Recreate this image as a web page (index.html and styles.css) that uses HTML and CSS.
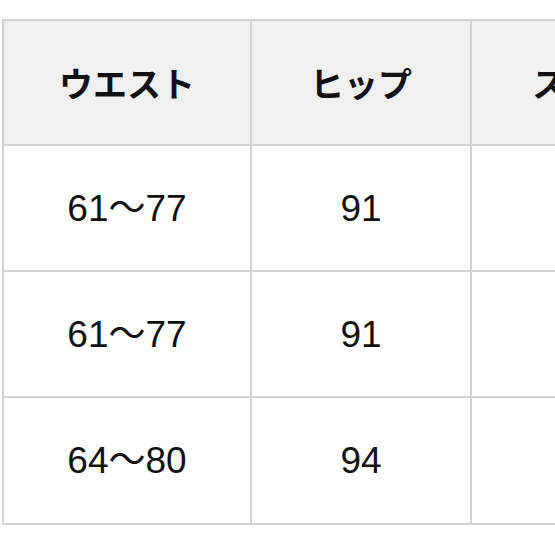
FILE: index.html
```html
<!DOCTYPE html>
<html lang="ja">
<head>
<meta charset="utf-8">
<link rel="stylesheet" href="styles.css">
</head>
<body>
<div class="wrap">
<table class="size">
<colgroup><col class="c1"><col class="c2"><col class="c3"></colgroup>
<thead>
<tr class="head"><th>ウエスト</th><th>ヒップ</th><th>スカート丈</th></tr>
</thead>
<tbody>
<tr class="r1"><td>61～77</td><td>91</td><td></td></tr>
<tr class="r2"><td>61～77</td><td>91</td><td></td></tr>
<tr class="r3"><td>64～80</td><td>94</td><td></td></tr>
</tbody>
</table>
</div>
</body>
</html>
```
FILE: styles.css
```css
html, body { margin: 0; padding: 0; background: #fff; }
.wrap {
  width: 555px;
  height: 555px;
  overflow: hidden;
  padding: 19px 0 0 2px;
  box-sizing: border-box;
}
.size {
  table-layout: fixed;
  width: 762px;
  border-collapse: separate;
  border-spacing: 0;
  border-left: 2px solid #d3d3d3;
  border-top: 2px solid #d3d3d3;
  font-family: "Liberation Sans", "Noto Sans CJK JP", sans-serif;
  color: #111;
}
.c1 { width: 248px; }
.c2 { width: 220px; }
.c3 { width: 292px; }
.size th, .size td {
  box-sizing: border-box;
  border-right: 2px solid #d3d3d3;
  border-bottom: 2px solid #d3d3d3;
  text-align: center;
  vertical-align: middle;
  padding: 0;
  white-space: nowrap;
  overflow: hidden;
  line-height: 1;
}
.size th {
  background: #f0f0f0;
  font-family: "Noto Sans CJK JP", sans-serif;
  font-weight: 700;
  font-size: 34px;
  height: 125px;
}
.size td {
  font-size: 37px;
  font-weight: 400;
}
.r1 td, .r2 td { height: 126px; }
.r3 td { height: 127px; }
```
